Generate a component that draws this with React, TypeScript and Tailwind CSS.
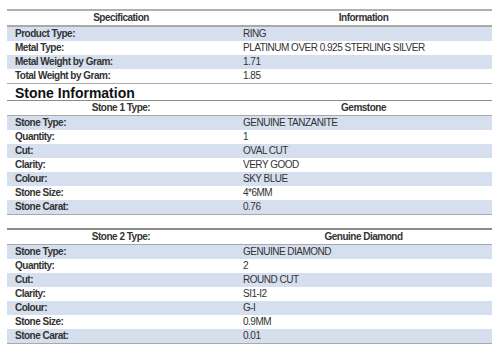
const specRows: [string, string][] = [
  ['Product Type:', 'RING'],
  ['Metal Type:', 'PLATINUM OVER 0.925 STERLING SILVER'],
  ['Metal Weight by Gram:', '1.71'],
  ['Total Weight by Gram:', '1.85'],
];

const stones: { title: string; kind: string; rows: [string, string][] }[] = [
  {
    title: 'Stone 1 Type:',
    kind: 'Gemstone',
    rows: [
      ['Stone Type:', 'GENUINE TANZANITE'],
      ['Quantity:', '1'],
      ['Cut:', 'OVAL CUT'],
      ['Clarity:', 'VERY GOOD'],
      ['Colour:', 'SKY BLUE'],
      ['Stone Size:', '4*6MM'],
      ['Stone Carat:', '0.76'],
    ],
  },
  {
    title: 'Stone 2 Type:',
    kind: 'Genuine Diamond',
    rows: [
      ['Stone Type:', 'GENUINE DIAMOND'],
      ['Quantity:', '2'],
      ['Cut:', 'ROUND CUT'],
      ['Clarity:', 'SI1-I2'],
      ['Colour:', 'G-I'],
      ['Stone Size:', '0.9MM'],
      ['Stone Carat:', '0.01'],
    ],
  },
];

function HeaderRow({ left, right }: { left: string; right: string }) {
  return (
    <div className="grid grid-cols-[228px_1fr] h-[14px] items-center font-bold text-[#333]">
      <div className="text-center">{left}</div>
      <div className="text-center">{right}</div>
    </div>
  );
}

function Rows({ rows }: { rows: [string, string][] }) {
  return (
    <div>
      {rows.map(([label, value], i) => (
        <div
          key={label}
          className={`grid grid-cols-[228px_1fr] h-[14px] items-center ${i % 2 === 0 ? 'bg-[#d6dfee]' : ''}`}
        >
          <div className="pl-[8px] font-bold text-[#333]">{label}</div>
          <div className="pl-[8px] text-[#333]">{value}</div>
        </div>
      ))}
    </div>
  );
}

export default function App() {
  return (
    <div
      className="w-[500px] h-[354px] bg-white pt-[9px] text-[10px] tracking-[-0.5px] leading-none"
      style={{ fontFamily: '"Liberation Sans", Arial, sans-serif' }}
    >
      <div className="mx-[7px] w-[485px]">
        <div className="border-t-2 border-[#b0b0b0]">
          <HeaderRow left="Specification" right="Information" />
          <div className="h-[2px] bg-[#a9a9a9]"></div>
          <Rows rows={specRows} />
          <div className="h-[1px] bg-[#a9a9a9]"></div>
        </div>

        <h2 className="h-[16px] pl-[8px] pt-[2px] text-[14px] tracking-normal font-bold text-[#111] leading-none">
          Stone Information
        </h2>
        <div className="h-[1px] bg-[#8c8c8c]"></div>

        {stones.map((s, idx) => (
          <div key={s.title} className={idx > 0 ? 'mt-[13px] border-t-2 border-[#8c8c8c]' : ''}>
            <HeaderRow left={s.title} right={s.kind} />
            <div className="h-[1px] bg-[#a9a9a9]"></div>
            <Rows rows={s.rows} />
            <div className="h-[1px] bg-[#a9a9a9]"></div>
          </div>
        ))}
      </div>
    </div>
  );
}
